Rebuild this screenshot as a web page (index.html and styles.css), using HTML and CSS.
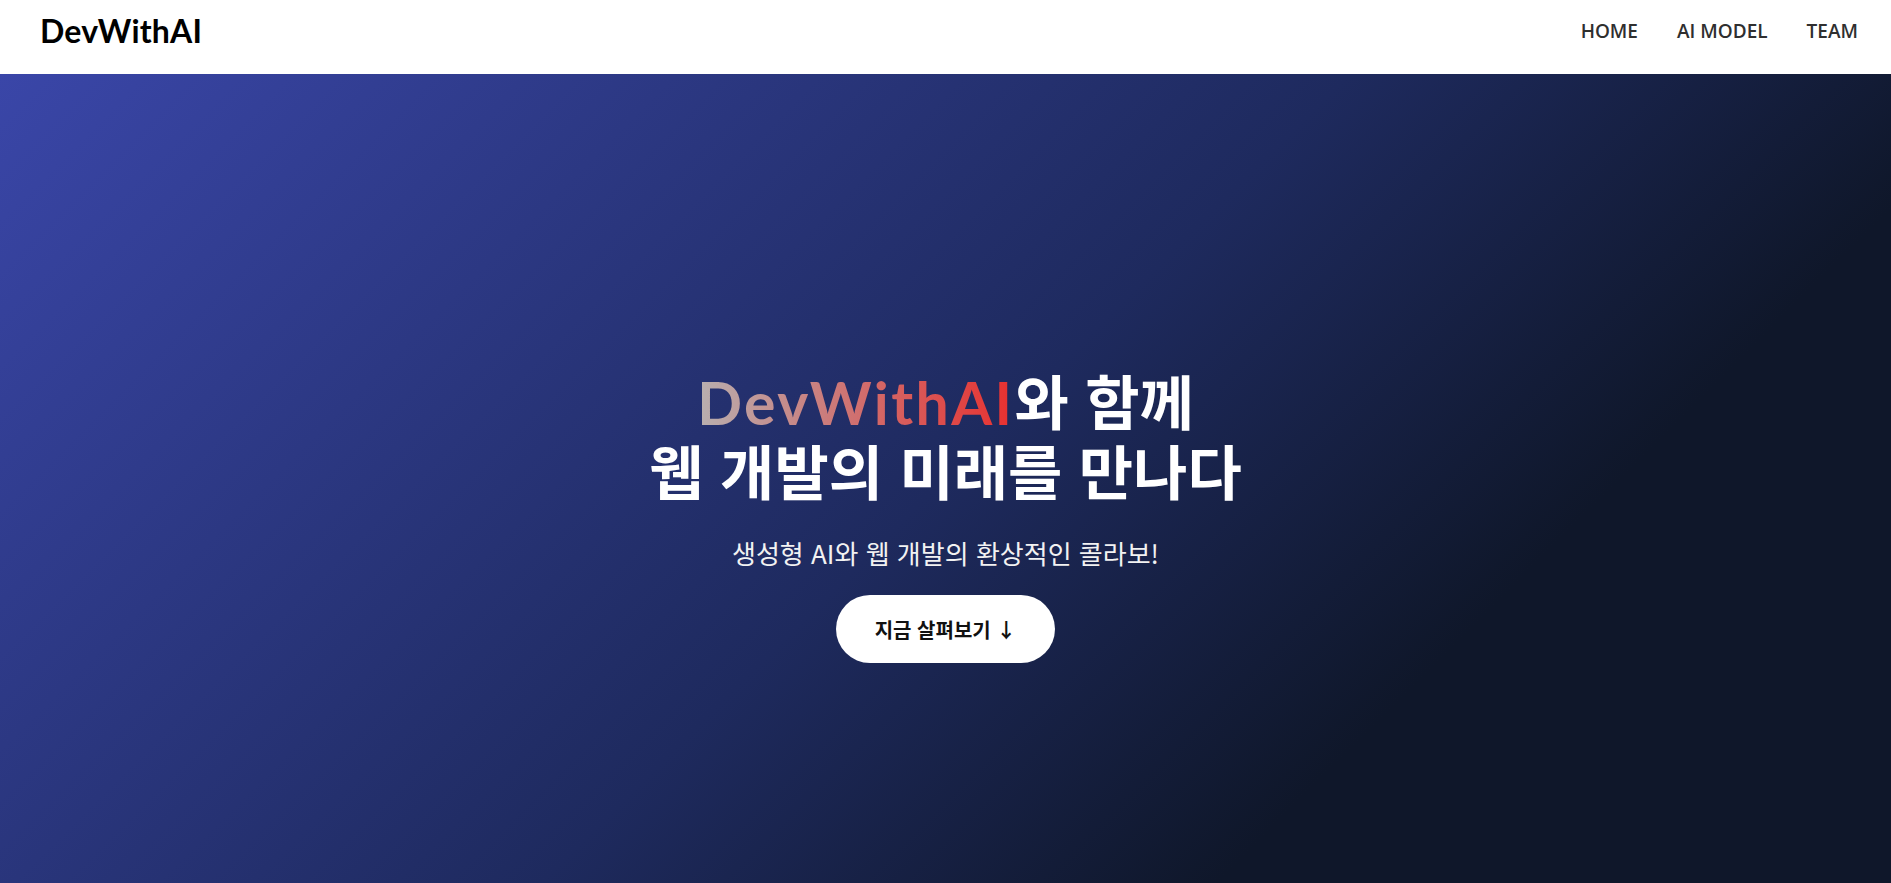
FILE: index.html
```html
<!DOCTYPE html>
<html lang="ko">
<head>
<meta charset="utf-8">
<title>DevWithAI</title>
<link rel="stylesheet" href="styles.css">
</head>
<body>
<header class="site-header">
  <a class="logo" href="#">DevWithAI</a>
  <nav class="nav">
    <a href="#">HOME</a>
    <a href="#">AI MODEL</a>
    <a href="#">TEAM</a>
  </nav>
</header>
<main class="hero">
  <div class="hero-content">
    <h1 class="hero-title"><span class="line"><span class="brand">DevWithAI</span>와 함께</span><span class="line">웹 개발의 미래를 만나다</span></h1>
    <p class="hero-sub">생성형 AI와 웹 개발의 환상적인 콜라보!</p>
    <a class="cta" href="#">지금 살펴보기 ↓</a>
  </div>
</main>
</body>
</html>
```
FILE: styles.css
```css
* { box-sizing: border-box; }
html, body { margin: 0; padding: 0; }
body {
  font-family: "Noto Sans CJK KR", "Noto Sans", sans-serif;
  background: #0f172a;
}
a { text-decoration: none; }

.site-header {
  height: 74px;
  background: #ffffff;
  display: flex;
  align-items: center;
  justify-content: space-between;
  padding: 0 33px 0 40px;
}
.logo {
  font-family: "Lato", "Inter", sans-serif;
  font-weight: 700;
  font-size: 32px;
  color: #000;
  letter-spacing: 0.2px;
  margin-top: -14px;
}
.nav {
  display: flex;
  gap: 39px;
  margin-top: -12px;
}
.nav a {
  font-family: "Open Sans", "Noto Sans", sans-serif;
  font-weight: 600;
  font-size: 19px;
  color: #2f2f2f;
}

.hero {
  height: 809px;
  background: linear-gradient(135deg, #3a46a8 0%, #1e2a5e 50%, #0f172a 75%);
  display: flex;
  align-items: center;
  justify-content: center;
  padding-top: 71px;
}
.hero-content {
  display: flex;
  flex-direction: column;
  align-items: center;
  text-align: center;
}
.hero-title {
  margin: 0;
  color: #fff;
  font-size: 59px;
  font-weight: 700;
  line-height: 70px;
  letter-spacing: 0;
  display: flex;
  flex-direction: column;
  align-items: center;
}
.line {
  display: block;
  height: 70px;
}
.brand {
  font-family: "Lato", "Inter", sans-serif;
  font-weight: 700;
  letter-spacing: 2.4px;
  background: linear-gradient(90deg, #b8b0b0 0%, #e8302f 100%);
  -webkit-background-clip: text;
  background-clip: text;
  color: transparent;
}
.hero-sub {
  margin: 30px 0 0;
  color: #f2f2f2;
  font-size: 26px;
  font-weight: 400;
  line-height: 1.4;
}
.cta {
  margin-top: 24px;
  display: inline-flex;
  align-items: center;
  justify-content: center;
  width: 219px;
  height: 68px;
  border-radius: 34px;
  background: #fff;
  color: #111;
  font-size: 20px;
  font-weight: 700;
}
```
